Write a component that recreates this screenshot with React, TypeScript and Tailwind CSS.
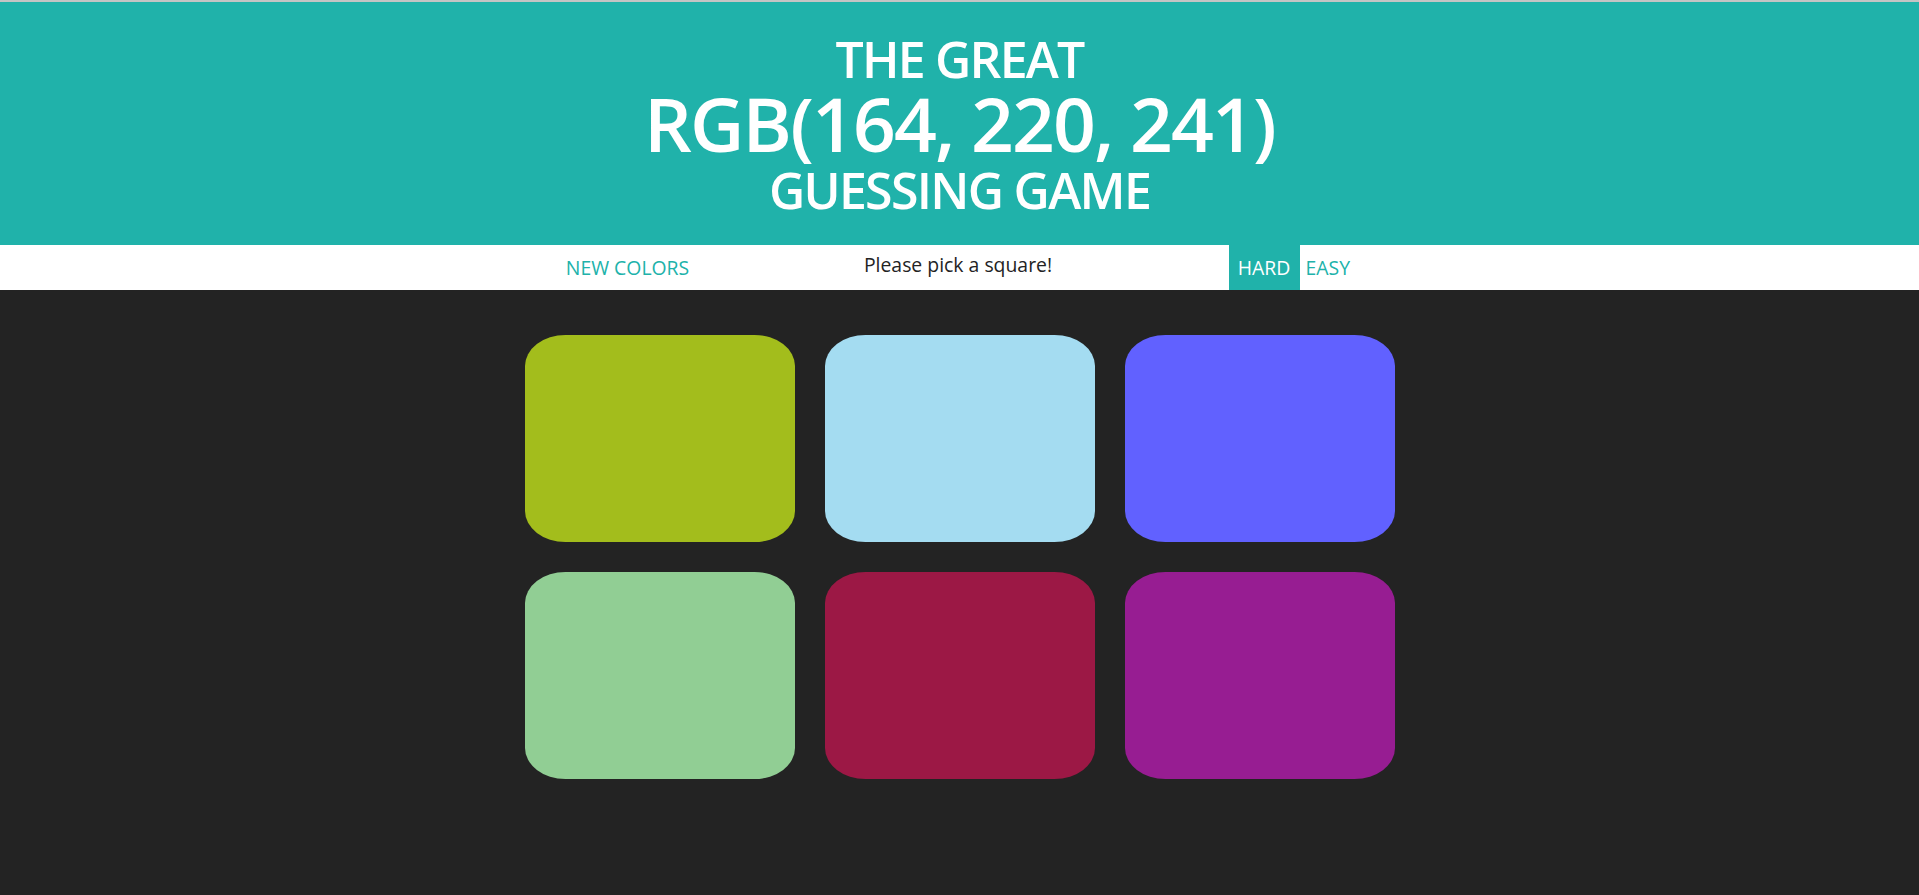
const squares = ['#a3bd1c', '#a4dcf1', '#6161ff', '#91ce94', '#9c1845', '#971d92'];

export default function App() {
  return (
    <div className="min-h-[895px] bg-[#232323] font-['Open_Sans',sans-serif]">
      <h1 className="border-t-2 border-[#c4c4c4] bg-[#20b2aa] pt-[31px] pb-[27px] text-center font-semibold uppercase text-white">
        <span className="block text-[50px] leading-[52px] tracking-[-1.8px]">The Great</span>
        <span className="block text-[75px] leading-[77px] tracking-[-1.9px]">RGB(164, 220, 241)</span>
        <span className="block text-[50px] leading-[56px] tracking-[-1.7px]">Guessing Game</span>
      </h1>

      <div className="h-[45px] bg-white">
        <div className="mx-auto flex h-full w-[870px] text-[19.4px]">
          <button className="ml-[33px] w-[140px] uppercase text-[#20b2aa]">New Colors</button>
          <span className="mr-[10px] w-[521px] pt-[5px] text-center text-[#232323]">Please pick a square!</span>
          <button className="w-[71px] bg-[#20b2aa] uppercase text-white">Hard</button>
          <button className="px-[6px] uppercase text-[#20b2aa]">Easy</button>
        </div>
      </div>

      <div className="mx-auto mt-[45px] grid w-[870px] grid-cols-3 gap-[30px]">
        {squares.map((c) => (
          <div key={c} className="h-[207px] rounded-[15%]" style={{ backgroundColor: c }} />
        ))}
      </div>
    </div>
  );
}
